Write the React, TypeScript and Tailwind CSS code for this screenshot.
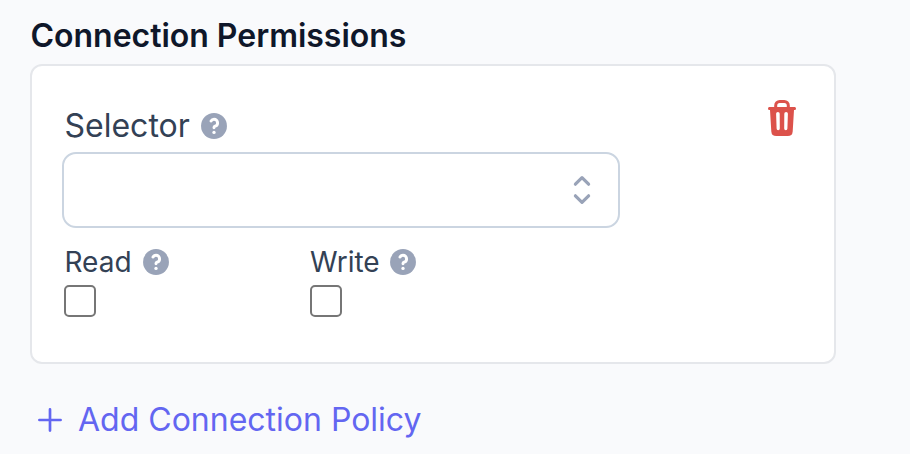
import { useState } from "react";

function HelpIcon() {
  return (
    <svg className="h-8 w-8 shrink-0" viewBox="0 0 20 20" fill="none">
      <circle cx="10" cy="10" r="8.100" fill="#99a3b8" />
      <path
        d="M8.150 6.900C8.550 6.200 9.200 5.800 10 5.800A2.250 2.250 0 0 1 12.250 8.050c0 1.050-.7 1.750-1.550 2.050-.45.15-.7.4-.7.800V11.100"
        stroke="#fff"
        strokeWidth="1.850"
        strokeLinecap="round"
        strokeLinejoin="round"
      />
      <circle cx="10" cy="14" r="1.050" fill="#fff" />
    </svg>
  );
}

function SelectorIcon() {
  return (
    <svg className="h-10 w-10" viewBox="0 0 20 20" fill="none" stroke="#99a3b8" strokeWidth="1.600" strokeLinecap="round" strokeLinejoin="round">
      <path d="M6.700 7.100 10 3.800l3.300 3.300M6.700 12.900l3.300 3.300 3.300-3.300" />
    </svg>
  );
}

function TrashIcon() {
  return (
    <svg className="h-9 w-7" viewBox="0 0 28 36" fill="none">
      <path d="M7.700 8V5.500a4 4 0 0 1 4-4h4.600a4 4 0 0 1 4 4V8" stroke="#dc524b" strokeWidth="3" />
      <path
        fillRule="evenodd"
        d="M1.200 7h25.600q1.200 0 1.200 1.500T26.800 10H26l-1.300 21.400a5 5 0 0 1-5 4.600H8.300a5 5 0 0 1-5-4.600L2 10h-.8Q0 10 0 8.500T1.200 7ZM8.100 13.700l.5 14.900a1.600 1.600 0 0 0 3.200 0l-.1-14.900a1.800 1.800 0 0 0-3.600 0ZM16.300 13.700l-.1 14.900a1.600 1.600 0 0 0 3.200 0l.5-14.900a1.800 1.800 0 0 0-3.600 0Z"
        fill="#dc524b"
      />
    </svg>
  );
}

function Permission({ label, gap }: { label: string; gap: string }) {
  const [checked, setChecked] = useState(false);
  return (
    <label className="flex w-[246px] flex-col">
      <span className={`flex h-10 items-center text-[28px] leading-10 text-[#334155] ${gap}`}>
        {label}
        <HelpIcon />
      </span>
      <input
        type="checkbox"
        checked={checked}
        onChange={() => setChecked(!checked)}
        className="mt-[3px] h-8 w-8 appearance-none rounded-[5px] border-2 border-[#767676] bg-white checked:bg-indigo-500"
      />
    </label>
  );
}

export default function App() {
  return (
    <main className="h-[454px] w-[910px] overflow-hidden bg-[#f9fafc] pl-[30px] pt-3 font-['Inter',sans-serif]">
      <h2 className="h-[52px] pl-[0.5px] text-[32px] font-semibold leading-[48px] tracking-[-0.02px] text-[#0f172a]">
        Connection Permissions
      </h2>
      <section className="flex h-[300px] w-[806px] justify-between rounded-xl border-2 border-[#e5e7eb] bg-white pl-[30px] pr-[38px] pt-[34px]">
        <div>
          <div className="flex h-[52px] items-center gap-2 pl-[2.5px] text-[32px] leading-[52px] text-[#334155]">
            Selector
            <HelpIcon />
          </div>
          <button
            type="button"
            aria-label="Selector"
            className="flex h-[76px] w-[558px] items-center justify-end rounded-[14px] border-2 border-[#cbd5e1] bg-white pr-4"
          >
            <SelectorIcon />
          </button>
          <div className="mt-[14px] flex pl-[2px]">
            <Permission label="Read" gap="pl-[0.5px] gap-[8.5px]" />
            <Permission label="Write" gap="gap-[7px]" />
          </div>
        </div>
        <button type="button" aria-label="Delete" className="h-9 w-7">
          <TrashIcon />
        </button>
      </section>
      <button
        type="button"
        className="mt-8 flex h-12 items-center gap-4 pl-2 text-[32px] leading-[48px] text-[#6366f1]"
      >
        <svg className="h-6 w-6" viewBox="0 0 24 24" fill="none" stroke="#6366f1" strokeWidth="2.700" strokeLinecap="round">
          <path d="M12 1.400v21.200M1.400 12h21.200" />
        </svg>
        Add Connection Policy
      </button>
    </main>
  );
}
